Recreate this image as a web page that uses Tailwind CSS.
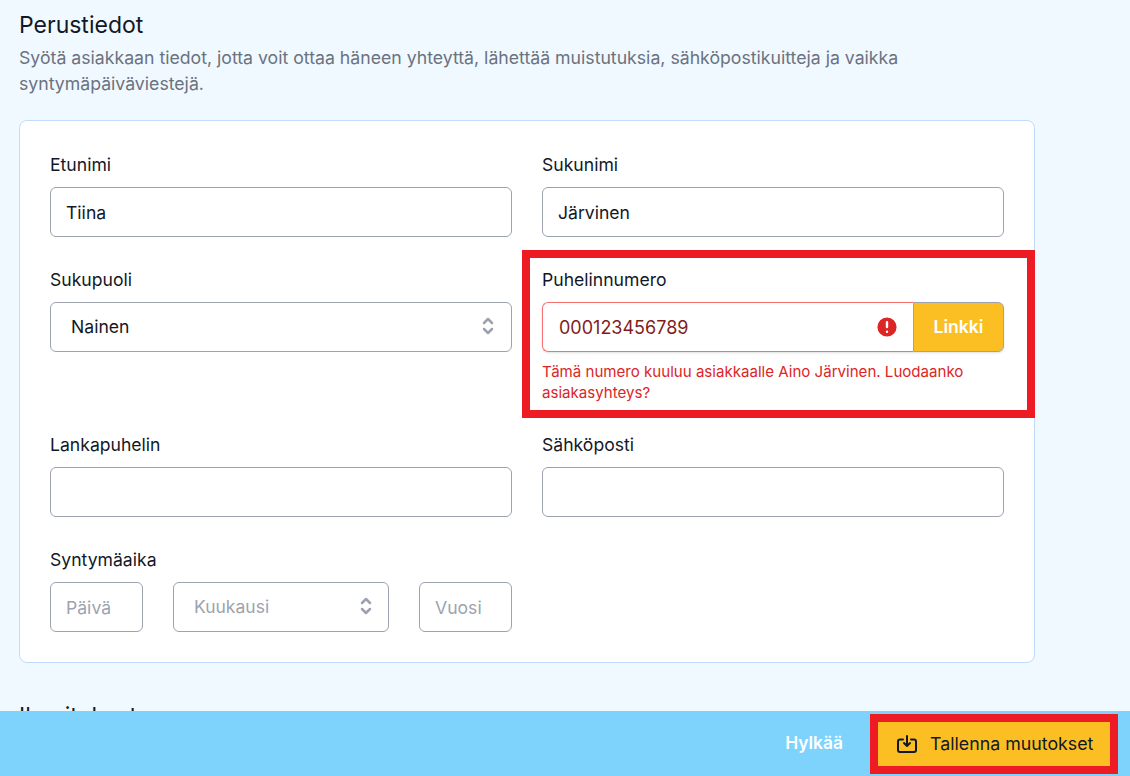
<!DOCTYPE html>
<html lang="fi">
  <head>
    <meta charset="UTF-8" />
    <title>Perustiedot</title>
    <script src="https://cdn.jsdelivr.net/npm/@tailwindcss/browser@4"></script>
  </head>
  <body class="h-screen overflow-hidden flex flex-col bg-[#f0f9ff] text-[#111827] font-['Inter',sans-serif]">
    <main class="flex-1 min-h-0 overflow-hidden pl-[19px] pr-[95px] pt-[11px]">
      <h2 class="text-[23px] leading-7 font-normal">Perustiedot</h2>
      <p class="mt-[6px] text-[17.68px] leading-[26px] text-[#6b7280]">
        Syötä asiakkaan tiedot, jotta voit ottaa häneen yhteyttä, lähettää muistutuksia, sähköpostikuitteja ja vaikka syntymäpäiväviestejä.
      </p>

      <!-- Card -->
      <div class="relative mt-[23px] bg-white border border-[#bfdbfe] rounded-lg pt-[32px] pb-[30px] px-[30px]">
        <div class="grid grid-cols-2 gap-x-[30px] gap-y-[31px]">
          <div>
            <label class="block text-[17.6px] leading-6">Etunimi</label>
            <input value="Tiina" class="mt-[10px] w-full h-[50px] px-[15px] bg-white border border-[#9ca3af] rounded-md text-[17.6px]" />
          </div>
          <div>
            <label class="block text-[17.6px] leading-6">Sukunimi</label>
            <input value="Järvinen" class="mt-[10px] w-full h-[50px] px-[15px] bg-white border border-[#9ca3af] rounded-md text-[17.6px]" />
          </div>

          <div>
            <label class="block text-[17.6px] leading-6">Sukupuoli</label>
            <div class="relative mt-[10px]">
              <select class="appearance-none w-full h-[50px] pl-5 pr-10 bg-white border border-[#9ca3af] rounded-md text-[17.6px]">
                <option>Nainen</option>
              </select>
              <svg class="absolute right-[14px] top-[14px] w-[20px] h-[20px] text-[#9ca3af]" viewBox="0 0 20 20" fill="none" stroke="currentColor" stroke-width="2.5" stroke-linecap="round" stroke-linejoin="round">
                <path d="M6 7 10 3l4 4M6 13l4 4 4-4" />
              </svg>
            </div>
          </div>
          <div class="relative">
            <label class="block text-[17.6px] leading-6">Puhelinnumero</label>
            <div class="mt-[10px] flex h-[50px] rounded-md shadow-sm">
              <div class="relative flex-1 min-w-0">
                <input value="000123456789" class="w-full h-full pl-4 pr-10 bg-white border border-[#f87171] border-r-0 rounded-l-md text-[18px] text-[#7f1d1d]" />
                <svg class="absolute right-[14px] top-[13px] w-6 h-6 text-[#dc2626]" viewBox="0 0 20 20" fill="currentColor">
                  <path fill-rule="evenodd" d="M18 10a8 8 0 11-16 0 8 8 0 0116 0zm-7 4a1 1 0 11-2 0 1 1 0 012 0zm-1-9a1 1 0 00-1 1v4a1 1 0 102 0V6a1 1 0 00-1-1z" clip-rule="evenodd" />
                </svg>
              </div>
              <button class="w-[91px] shrink-0 bg-[#fbbf24] border border-[#9ca3af] rounded-r-md text-[17.6px] font-semibold text-white">Linkki</button>
            </div>
            <p class="mt-[9px] -mb-px text-[15.08px] leading-[21px] text-[#dc2626]">Tämä numero kuuluu asiakkaalle Aino Järvinen. Luodaanko asiakasyhteys?</p>
            <div class="absolute -left-[20px] -right-[31px] -top-[18px] -bottom-[16px] border-8 border-[#ed1c24] pointer-events-none"></div>
          </div>

          <div>
            <label class="block text-[17.6px] leading-6">Lankapuhelin</label>
            <input class="mt-[10px] w-full h-[50px] px-[15px] bg-white border border-[#9ca3af] rounded-md text-[17.6px]" />
          </div>
          <div>
            <label class="block text-[17.6px] leading-6">Sähköposti</label>
            <input class="mt-[10px] w-full h-[50px] px-[15px] bg-white border border-[#9ca3af] rounded-md text-[17.6px]" />
          </div>

          <div>
            <label class="block text-[17.6px] leading-6">Syntymäaika</label>
            <div class="mt-[10px] flex gap-[30px]">
              <input placeholder="Päivä" class="w-[93px] h-[50px] px-[15px] bg-white border border-[#9ca3af] rounded-md text-[17.6px] placeholder:text-[#9ca3af]" />
              <div class="relative flex-1">
                <select class="appearance-none w-full h-[50px] pl-5 pr-10 bg-white border border-[#9ca3af] rounded-md text-[17.5px] text-[#9ca3af]">
                  <option>Kuukausi</option>
                </select>
                <svg class="absolute right-[13px] top-[14px] w-[20px] h-[20px] text-[#9ca3af]" viewBox="0 0 20 20" fill="none" stroke="currentColor" stroke-width="2.5" stroke-linecap="round" stroke-linejoin="round">
                  <path d="M6 7 10 3l4 4M6 13l4 4 4-4" />
                </svg>
              </div>
              <input placeholder="Vuosi" class="w-[93px] h-[50px] px-[15px] bg-white border border-[#9ca3af] rounded-md text-[17.6px] placeholder:text-[#9ca3af]" />
            </div>
          </div>
        </div>
      </div>

      <h2 class="mt-[39px] text-[23px] leading-7 font-normal">Ilmoitukset</h2>
    </main>

    <!-- Footer bar -->
    <footer class="shrink-0 h-[65px] bg-[#7dd3fc] flex items-start justify-end pr-[12px] pt-[3px]">
      <button class="mr-[27px] mt-[17px] text-[17.4px] leading-6 font-semibold text-white">Hylkää</button>
      <div class="border-8 border-[#ed1c24]">
        <button class="flex items-center w-[232px] h-[44px] pl-[17px] bg-[#fbbf24] text-[17.8px] text-[#111827]">
          <svg class="w-6 h-6 mr-[11px]" viewBox="0 0 24 24" fill="none" stroke="currentColor" stroke-width="2" stroke-linecap="round" stroke-linejoin="round">
            <path d="M8 7.5H5a2 2 0 0 0-2 2v8.500a2 2 0 0 0 2 2h14a2 2 0 0 0 2-2V9.500a2 2 0 0 0-2-2h-3" />
            <path d="M12 4v10m-3-3 3 3 3-3" />
          </svg>
          Tallenna muutokset
        </button>
      </div>
    </footer>
  </body>
</html>
